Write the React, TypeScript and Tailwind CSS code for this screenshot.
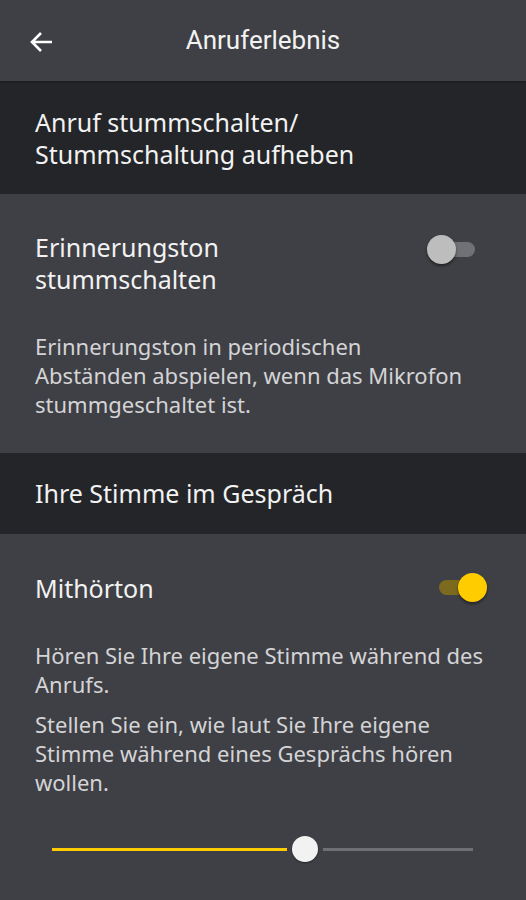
import React from "react";

const FONT = { fontFamily: '"Noto Sans", "Open Sans", sans-serif' };

function Toggle({ on }: { on: boolean }) {
  if (on) {
    return (
      <div className="relative h-[30px] w-[50px] shrink-0">
        <div className="absolute left-[1px] top-[7px] h-[15px] w-[38px] rounded-full bg-[#7c6b1e]" />
        <div className="absolute left-[20px] top-0 h-[29px] w-[29px] rounded-full bg-[#ffcc00] shadow-[0_2px_3px_rgba(0,0,0,0.45)]" />
      </div>
    );
  }
  return (
    <div className="relative h-[30px] w-[50px] shrink-0">
      <div className="absolute left-[11px] top-[7px] h-[15px] w-[37px] rounded-full bg-[#707175]" />
      <div className="absolute left-0 top-0 h-[29px] w-[29px] rounded-full bg-[#bdbdbd] shadow-[0_2px_3px_rgba(0,0,0,0.45)]" />
    </div>
  );
}

export default function App() {
  return (
    <div className="min-h-[900px] w-[526px] bg-[#3f4045] text-[#f2f2f2]" style={FONT}>
      {/* top bar */}
      <div className="relative flex h-[81px] items-center justify-center bg-[#3f4045] shadow-[0_1px_2px_rgba(0,0,0,0.3)]">
        <svg className="absolute left-[28px] top-[30px]" width="26" height="24" viewBox="0 0 26 24" fill="none">
          <path d="M24 12H4M13 3l-9 9 9 9" stroke="#ffffff" strokeWidth="2.6" />
        </svg>
        <span className="text-[26px]" style={{ fontFamily: "Roboto, sans-serif" }}>Anruferlebnis</span>
      </div>

      {/* section header */}
      <div className="flex h-[113px] items-center bg-[#242528] px-[35px]">
        <p className="text-[25px] leading-[32px]">
          Anruf stummschalten/
          <br />
          Stummschaltung aufheben
        </p>
      </div>

      {/* reminder tone */}
      <div className="bg-[#3f4045] pb-[34px] pl-[35px] pr-[30px] pt-[37px]">
        <div className="flex items-start justify-between">
          <p className="text-[25px] leading-[32px]">
            Erinnerungston
            <br />
            stummschalten
          </p>
          <div className="mr-[19px] mt-[4px]">
            <Toggle on={false} />
          </div>
        </div>
        <p className="mt-[37px] w-[435px] text-[22px] leading-[29px] text-[#d4d4d6]">
          Erinnerungston in periodischen Abständen abspielen, wenn das Mikrofon stummgeschaltet ist.
        </p>
      </div>

      {/* section header */}
      <div className="flex h-[81px] items-center bg-[#242528] px-[35px]">
        <p className="text-[25px]">Ihre Stimme im Gespräch</p>
      </div>

      {/* sidetone */}
      <div className="bg-[#3f4045] pl-[35px] pr-[30px] pt-[38px]">
        <div className="flex items-center justify-between">
          <p className="text-[25px] leading-[32px]">Mithörton</p>
          <div className="mr-[8px]">
            <Toggle on={true} />
          </div>
        </div>
        <p className="mt-[37px] text-[22px] leading-[29px] text-[#d4d4d6]">
          Hören Sie Ihre eigene Stimme während des Anrufs.
        </p>
        <p className="mt-[11px] text-[22px] leading-[29px] text-[#d4d4d6]">
          Stellen Sie ein, wie laut Sie Ihre eigene Stimme während eines Gesprächs hören wollen.
        </p>

        {/* slider */}
        <div className="mt-[39px] flex items-center pl-[17px] pr-[23px]">
          <div className="h-[3px] w-[235px] bg-[#ffcc00]" />
          <div className="mx-[5px] h-[26px] w-[26px] shrink-0 rounded-full bg-[#f2f2f2] shadow-[0_1px_2px_rgba(0,0,0,0.4)]" />
          <div className="h-[3px] flex-1 bg-[#6f7074]" />
        </div>
      </div>
    </div>
  );
}
